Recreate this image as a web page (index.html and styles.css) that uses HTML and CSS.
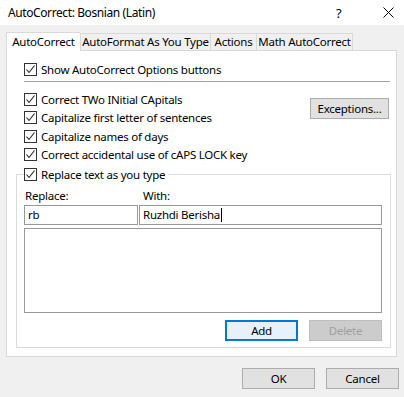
FILE: index.html
```html
<!DOCTYPE html>
<html lang="en">
<head>
    <meta charset="UTF-8">
    <title>AutoCorrect: Bosnian (Latin)</title>
    <link rel="stylesheet" href="styles.css">
</head>
<body>
    <div class="titlebar">
        <span class="title">AutoCorrect: Bosnian (Latin)</span>
        <span class="help">?</span>
        <span class="close">
            <svg width="11" height="11" viewBox="0 0 11 11"><path d="M0.5 0.5 L10.5 10.5 M10.5 0.5 L0.5 10.5" stroke="#000" stroke-width="1" fill="none"/></svg>
        </span>
    </div>

    <div class="content">
        <div class="tabs">
            <div class="tab active">AutoCorrect</div>
            <div class="tab tab-format">AutoFormat As You Type</div>
            <div class="tab tab-actions">Actions</div>
            <div class="tab tab-math">Math AutoCorrect</div>
        </div>

        <div class="panel">
            <div class="check-row first">
                <span class="box"><svg width="11" height="11" viewBox="0 0 11 11"><path d="M1.5 5.5 L4 8.5 L9.5 1.5" stroke="#222" stroke-width="1.1" fill="none"/></svg></span>
                Show AutoCorrect Options buttons
            </div>
            <div class="separator"></div>

            <div class="options">
                <div class="option-list">
                    <div class="check-row">
                        <span class="box"><svg width="11" height="11" viewBox="0 0 11 11"><path d="M1.5 5.5 L4 8.5 L9.5 1.5" stroke="#222" stroke-width="1.1" fill="none"/></svg></span>
                        Correct TWo INitial CApitals
                    </div>
                    <div class="check-row">
                        <span class="box"><svg width="11" height="11" viewBox="0 0 11 11"><path d="M1.5 5.5 L4 8.5 L9.5 1.5" stroke="#222" stroke-width="1.1" fill="none"/></svg></span>
                        Capitalize first letter of sentences
                    </div>
                    <div class="check-row">
                        <span class="box"><svg width="11" height="11" viewBox="0 0 11 11"><path d="M1.5 5.5 L4 8.5 L9.5 1.5" stroke="#222" stroke-width="1.1" fill="none"/></svg></span>
                        Capitalize names of days
                    </div>
                    <div class="check-row">
                        <span class="box"><svg width="11" height="11" viewBox="0 0 11 11"><path d="M1.5 5.5 L4 8.5 L9.5 1.5" stroke="#222" stroke-width="1.1" fill="none"/></svg></span>
                        Correct accidental use of cAPS LOCK key
                    </div>
                </div>
                <button class="btn exceptions">Exceptions...</button>
            </div>

            <fieldset class="replace-group">
                <legend class="check-row">
                    <span class="box"><svg width="11" height="11" viewBox="0 0 11 11"><path d="M1.5 5.5 L4 8.5 L9.5 1.5" stroke="#222" stroke-width="1.1" fill="none"/></svg></span>
                    Replace text as you type
                </legend>
                <div class="field-grid labels">
                    <span class="label-replace">Replace:</span>
                    <span class="label-with">With:</span>
                </div>
                <div class="field-grid">
                    <div class="input">rb</div>
                    <div class="input">Ruzhdi Berisha<span class="caret"></span></div>
                </div>
                <div class="listbox"></div>
                <div class="group-buttons">
                    <button class="btn default">Add</button>
                    <button class="btn disabled">Delete</button>
                </div>
            </fieldset>
        </div>

        <div class="footer">
            <button class="btn">OK</button>
            <button class="btn">Cancel</button>
        </div>
    </div>
</body>
</html>
```

FILE: styles.css
```css
body {
    margin: 0;
    width: 404px;
    height: 397px;
    overflow: hidden;
    background-color: #f0f0f0;
    font-family: "Noto Sans", "Open Sans", sans-serif;
    font-size: 11.5px;
    letter-spacing: -0.25px;
    color: #000;
}
.titlebar {
    height: 25px;
    background: #fff;
    display: flex;
    align-items: center;
}
.title {
    margin-left: 8px;
    flex: 1;
    font-size: 12px;
    letter-spacing: -0.4px;
}
.help {
    width: 10px;
    margin-right: 37px;
    font-size: 13px;
}
.close {
    display: flex;
    margin-right: 10px;
}
.content {
    padding-top: 7px;
}
.tabs {
    display: flex;
    align-items: flex-end;
    height: 18px;
    margin-left: 6px;
}
.tab {
    height: 17px;
    line-height: 16px;
    text-align: center;
    border: 1px solid #d9d9d9;
    border-bottom: none;
    border-left: none;
    box-sizing: border-box;
    background: #f0f0f0;
}
.tab.active {
    width: 74px;
    height: 19px;
    line-height: 18px;
    margin-bottom: -1px;
    background: #fff;
    border-left: 1px solid #d9d9d9;
    border-right: none;
    position: relative;
    z-index: 1;
}
.tab-format {
    width: 131px;
    border-left: 1px solid #d9d9d9;
}
.tab-actions {
    width: 46px;
}
.tab-math {
    width: 96px;
}
.panel {
    margin-left: 6px;
    width: 391px;
    height: 307px;
    box-sizing: border-box;
    background: #fff;
    border: 1px solid #d9d9d9;
}
.check-row {
    display: flex;
    align-items: center;
    height: 18.5px;
    white-space: nowrap;
}
.check-row.first {
    height: 19px;
    margin-top: 9px;
    padding-left: 17px;
}
.box {
    width: 13px;
    height: 13px;
    box-sizing: border-box;
    border: 1px solid #333;
    background: #fff;
    margin-right: 4px;
    display: flex;
}
.separator {
    margin: 2px 6px 0 17px;
    border-top: 1px solid #a0a0a0;
}
.options {
    display: flex;
    margin-top: 8px;
    padding-left: 17px;
}
.option-list {
    flex: 1;
}
.btn {
    font-family: inherit;
    font-size: 11.5px;
    letter-spacing: -0.25px;
    color: #000;
    width: 73px;
    height: 21px;
    padding: 0;
    background: #e1e1e1;
    border: 1px solid #adadad;
    box-sizing: border-box;
}
.btn.exceptions {
    width: 79px;
    margin: 8px 7px 0 0;
}
.btn.default {
    background: #e5f1fb;
    border: 2px solid #0078d7;
}
.btn.disabled {
    background: #cccccc;
    border-color: #bfbfbf;
    color: #a0a0a0;
}
.replace-group {
    margin: 1px 6px 0 9px;
    padding: 0 8px 6px 7px;
    border: 1px solid #dcdcdc;
}
.replace-group legend {
    padding: 0 3px 0 0;
    margin-left: 0;
}
.field-grid {
    display: grid;
    grid-template-columns: 114px 243px;
    gap: 1px;
}
.field-grid.labels {
    margin-top: 4px;
    height: 16px;
    line-height: 16px;
    margin-bottom: 1px;
}
.label-replace {
    padding-left: 1px;
}
.label-with {
    padding-left: 4px;
}
.input {
    height: 20px;
    line-height: 18px;
    box-sizing: border-box;
    border: 1px solid #999;
    padding-left: 3px;
    display: flex;
    align-items: center;
}
.caret {
    width: 1px;
    height: 14px;
    background: #000;
    margin-left: 1px;
}
.listbox {
    margin-top: 3px;
    height: 85px;
    box-sizing: border-box;
    border: 1px solid #999;
}
.group-buttons {
    display: flex;
    justify-content: flex-end;
    gap: 11px;
    margin-top: 7px;
}
.footer {
    display: flex;
    justify-content: flex-end;
    gap: 11px;
    margin-top: 11px;
    padding-right: 5px;
}
```
